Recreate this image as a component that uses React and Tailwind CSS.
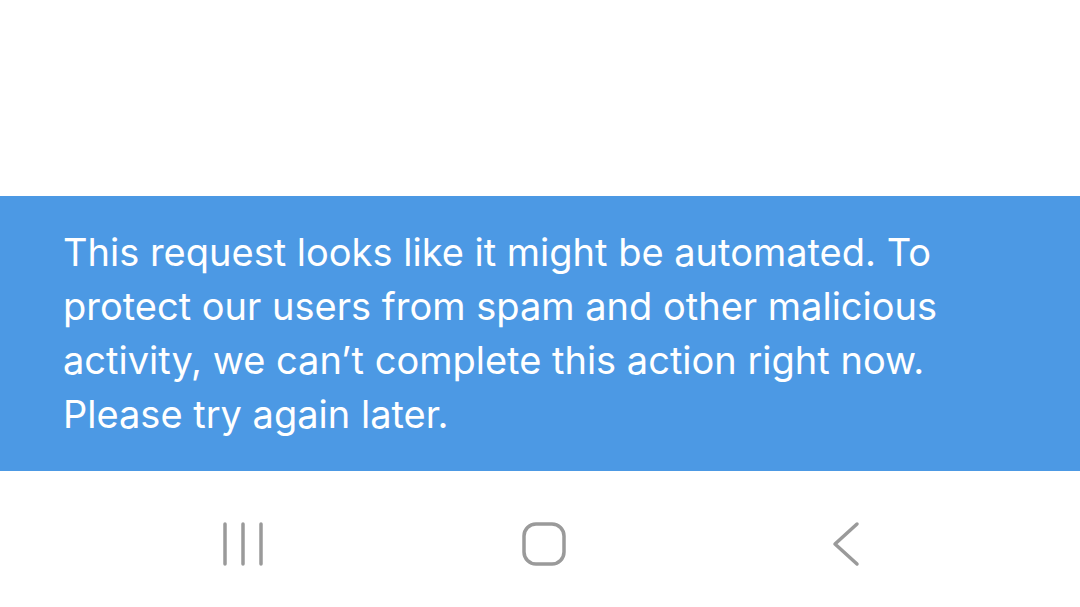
export default function App() {
  return (
    <div className="w-[1080px] h-[607px] bg-white flex flex-col font-['Inter',sans-serif]">
      <div className="h-[196px]" />

      {/* toast */}
      <div className="bg-[#4c99e4] pl-[63px] pr-[40px] pt-[29px] pb-[30px]">
        <p className="text-white text-[38px] leading-[54px] w-[895px]">
          This request looks like it might be automated. To protect our users
          from spam and other malicious activity, we can’t complete this action
          right now. Please try again later.
        </p>
      </div>

      {/* system nav bar */}
      <div className="flex-1 flex items-start justify-center pt-[50px] pl-[7px]">
        <div className="w-[301px] flex justify-center">
          <svg width="44" height="46" viewBox="0 0 44 46" fill="none" stroke="#9a9a9a" strokeWidth="3.5" strokeLinecap="round">
            <path d="M4 3v40M22 3v40M40 3v40" />
          </svg>
        </div>
        <div className="w-[301px] flex justify-center">
          <svg width="46" height="46" viewBox="0 0 46 46" fill="none" stroke="#9a9a9a" strokeWidth="3.5">
            <rect x="3" y="3" width="40" height="40" rx="12" />
          </svg>
        </div>
        <div className="w-[301px] flex justify-center">
          <svg width="30" height="46" viewBox="0 0 30 46" fill="none" stroke="#9a9a9a" strokeWidth="3.5" strokeLinecap="round" strokeLinejoin="round">
            <path d="M27 3L5 23l22 20" />
          </svg>
        </div>
      </div>
    </div>
  );
}
